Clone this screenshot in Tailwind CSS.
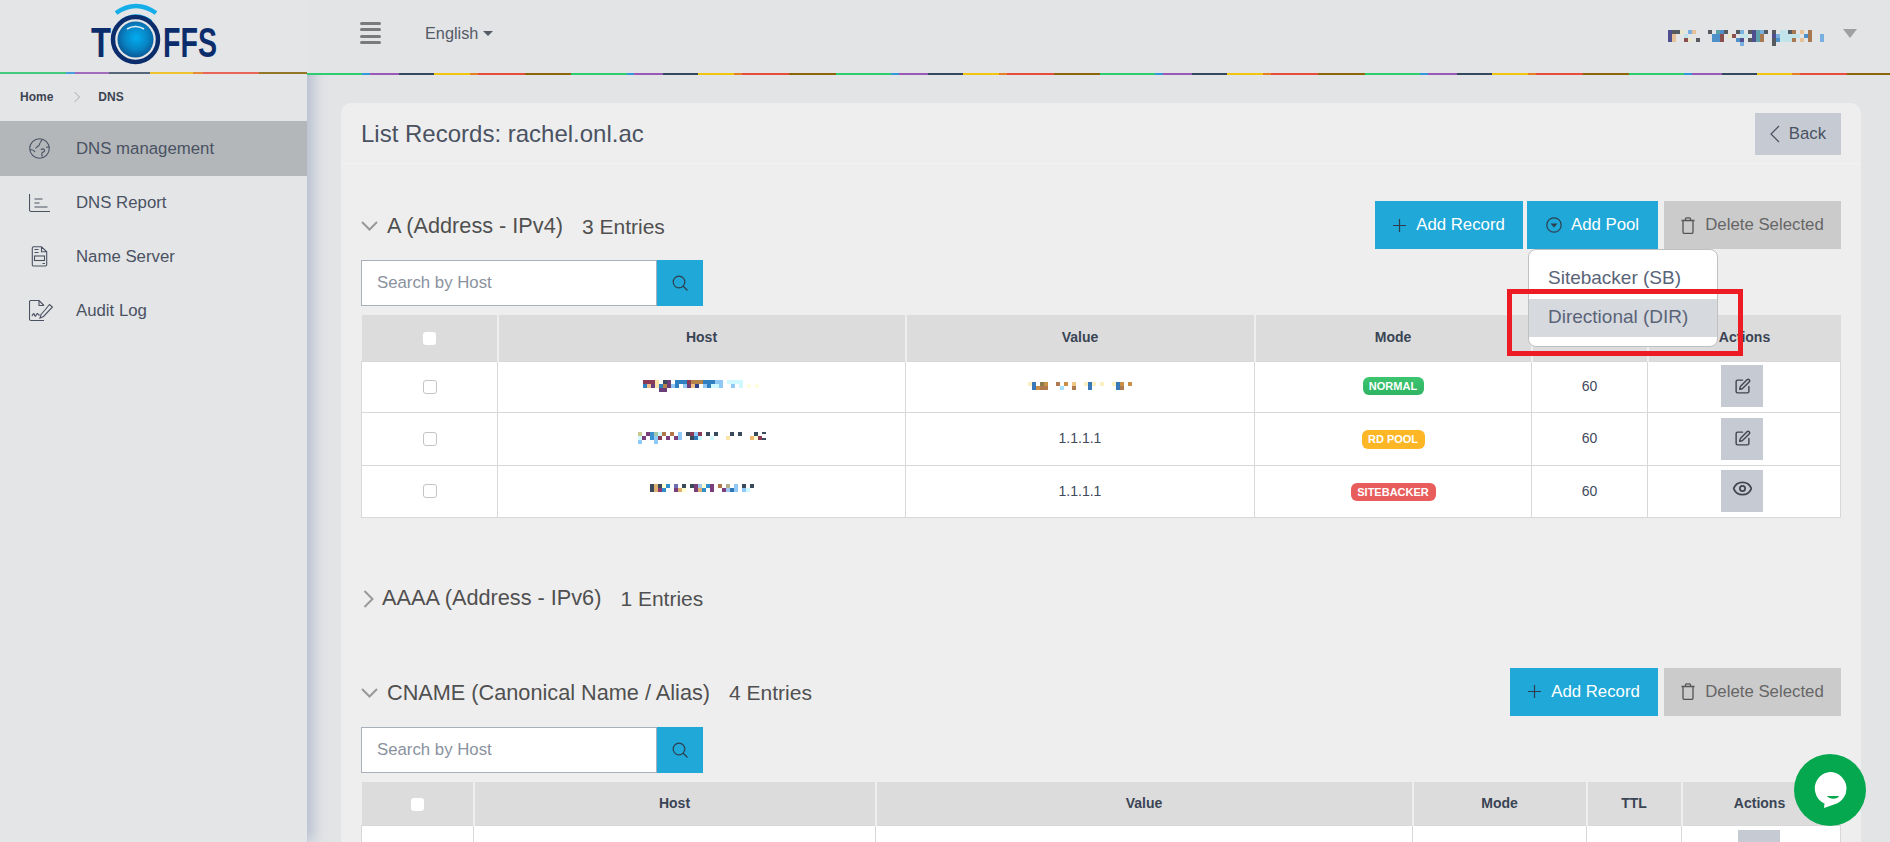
<!DOCTYPE html>
<html lang="en">
<head>
<meta charset="utf-8">
<title>List Records</title>
<script src="https://cdn.jsdelivr.net/npm/@tailwindcss/browser@4"></script>
</head>
<body class="font-['Liberation_Sans',Arial,sans-serif]">
<div class="relative flex h-[842px] w-[1890px] overflow-hidden bg-[#e3e4e6] text-[#4a5262]">

  <!-- left column -->
  <aside class="relative z-10 flex w-[307px] shrink-0 flex-col bg-[#e4e5e7] shadow-[6px_0_14px_#b4bdcf]">
    <div class="h-[72px]">
      <svg width="307" height="72" viewBox="0 0 307 72">
        <defs><radialGradient id="lens" cx="0.52" cy="0.45" r="0.6"><stop offset="0" stop-color="#02adf0"/><stop offset="0.55" stop-color="#0784c4"/><stop offset="1" stop-color="#0b4f8e"/></radialGradient></defs>
        <path d="M116 13Q136 -1 156 13" fill="none" stroke="#15aee8" stroke-width="4.5"/>
        <path d="M121 22Q136 11 151 22" fill="none" stroke="#15aee8" stroke-width="4.5"/>
        <text x="91" y="57" font-size="43" font-weight="700" fill="#0c2d6b" font-family="Liberation Sans" textLength="20" lengthAdjust="spacingAndGlyphs">T</text>
        <text x="163" y="57" font-size="43" font-weight="700" fill="#0c2d6b" font-family="Liberation Sans" textLength="54" lengthAdjust="spacingAndGlyphs">FFS</text>
        <circle cx="135.5" cy="39.5" r="22.5" fill="#e4e5e7" stroke="#0c2d6b" stroke-width="4.5"/>
        <circle cx="135.5" cy="39.5" r="18" fill="url(#lens)"/>
        <path d="M127 29Q135.500 24 144 29" fill="none" stroke="#dfeef6" stroke-width="1.500"/>
      </svg>
    </div>
    <div class="h-[2px] bg-[linear-gradient(90deg,#45c97f_0,#45c97f_66px,#4a9fdc_66px,#4a9fdc_75px,#a06cbb_75px,#a06cbb_109px,#56677a_109px,#56677a_150px,#efc22f_150px,#efc22f_193px,#e68a3c_193px,#e68a3c_203px,#e8655a_203px,#e8655a_259px,#957626_259px,#957626_307px)]"></div>
    <nav class="flex h-[47px] items-center pb-[2px] pl-[20px] text-[12px] font-bold text-[#3c4452]">
      <span>Home</span>
      <svg class="ml-[20px]" width="8" height="12" viewBox="0 0 8 12" fill="none" stroke="#aaa" stroke-width="1"><path d="M1.500 1 L6.500 6 L1.500 11"/></svg>
      <span class="ml-[17px]">DNS</span>
    </nav>
    <a class="flex h-[55px] items-center bg-[#b3b7ba] pl-[29px] text-[16.8px]">
      <svg class="w-[21px]" width="21" height="21" viewBox="0 0 21 21" fill="none" stroke="#4a5262" stroke-width="1.100"><circle cx="10.500" cy="10.500" r="9.800"/><path d="M1 12c3-1 4 1 5 2M13 1.500c-.5 2-2.500 3-2.500 5s-3 2-4 4M12 12c1-2 3-1 3.500 0s-1 2-2 2.500-1 3 0 4M17 9c1 0 2 0 3 .5M8 8l1 1"/></svg>
      <span class="ml-[26px]">DNS management</span>
    </a>
    <a class="flex h-[54px] items-center pl-[29px] text-[16.8px]">
      <svg class="w-[21px]" width="21" height="20" viewBox="0 0 21 20" fill="none" stroke="#4a5262" stroke-width="1.100"><path d="M.5 1v16a1.500 1.500 0 0 0 1.500 1.500h19M5.500 6h8M5.500 10h5M5.500 14h13"/></svg>
      <span class="ml-[26px]">DNS Report</span>
    </a>
    <a class="flex h-[54px] items-center pb-[1px] pl-[29px] text-[16.8px]">
      <svg class="w-[21px]" width="21" height="21" viewBox="0 0 16 21" fill="none" stroke="#4a5262" stroke-width="1.100"><path d="M2 .8h8l5.200 5v13a1.200 1.200 0 0 1-1.200 1.200H2a1.200 1.200 0 0 1-1.200-1.200V2A1.200 1.200 0 0 1 2 .8zM10 .8v5h5.200M3 3.500h4M3 6.500h4M11 17.500h2.500"/><rect x="3" y="10" width="10" height="4.500"/></svg>
      <span class="ml-[26px]">Name Server</span>
    </a>
    <a class="flex h-[54px] items-center pb-[1px] pl-[29px] text-[16.8px]">
      <svg class="w-[24px]" width="24" height="22" viewBox="0 0 24 22" fill="none" stroke="#4a5262" stroke-width="1.100"><path d="M15 20.500H2A1.500 1.500 0 0 1 .5 19V2A1.500 1.500 0 0 1 2 .5h8l5 5M10 .5v5h5M16 10l4.500-5.500 3 2.500-9 9.500-3.500 1.500 1-3.500zM3 16c1.500-3 2-3 2.500-1s1 1.500 2-.5 1.500 0 3 1"/></svg>
      <span class="ml-[23px]">Audit Log</span>
    </a>
  </aside>

  <!-- right column -->
  <div class="flex min-w-0 flex-1 flex-col">
    <header class="relative z-20 flex h-[73px] shrink-0 items-center bg-[#e3e4e6] pb-[7px]">
      <div class="ml-[53px] flex h-[22px] w-[21px] flex-col justify-between">
        <i class="block h-[3px] rounded-sm bg-[#7a7a7a]"></i><i class="block h-[3px] rounded-sm bg-[#7a7a7a]"></i><i class="block h-[3px] rounded-sm bg-[#7a7a7a]"></i><i class="block h-[3px] rounded-sm bg-[#7a7a7a]"></i>
      </div>
      <span class="ml-[44px] text-[16.3px] text-[#555b66]">English</span>
      <svg class="ml-[5px]" width="10" height="5" viewBox="0 0 10 5"><path d="M0 0h10L5 5z" fill="#555b66"/></svg>
      <svg class="ml-[1175px] mt-[10px]" width="156" height="16" viewBox="0 0 156 16" shape-rendering="crispEdges">
        <g fill="#555a60"><path d="M4 0h8v4H4zM40 0h4v4h-4zM56 0h4v4h-4zM68 0h4v4h-4zM80 0h4v4h-4zM96 0h4v4h-4zM104 0h4v4h-4zM120 0h8v4h-8zM144 0h-8v4h8zM28 8h4v4h-4zM80 8h4v4h-4zM68 8h4v4h-4zM104 8h4v4h-4zM104 12h4v4h-4zM132 0h12v4h-12z"/></g>
        <g fill="#4f4f8f"><path d="M0 0h4v12H0zM84 0h4v4h-4zM84 4h4v8h-4zM104 4h4v4h-4zM72 8h4v4h-4zM72 4v0"/></g>
        <g fill="#e8c098"><path d="M4 4h4v8H4zM24 0h4v4h-4zM132 8h4v4h-4zM132 0h4v4h-4z"/></g>
        <g fill="#e8e8c8"><path d="M12 0h4v4h-4zM20 8h4v4h-4zM60 4h4v4h-4z"/></g>
        <g fill="#5090c8"><path d="M44 4h8v8h-8zM52 0h4v4h-4zM68 8h4v4h-4zM108 8h4v4h-4zM140 4h-4v4h4z"/></g>
        <g fill="#7ab0e0"><path d="M20 0h4v4h-4zM72 0h4v4h-4zM92 0h4v4h-4zM108 4h8v4h-8zM152 4h4v8h-4zM72 12h4v4h-4z"/></g>
        <g fill="#c0e4ea"><path d="M16 4h4v4h-4zM72 4h8v4h-8zM112 0h8v12h-8zM120 4h12v4h-12zM116 8h12v4h-12z"/></g>
        <g fill="#8a5050"><path d="M16 8h4v4h-4zM52 4h4v8h-4zM64 4h4v4h-4z"/></g>
        <g fill="#a87850"><path d="M92 4h4v8h-4zM124 0h4v4h-4zM124 8h4v4h-4zM140 0h4v12h-4z"/></g>
        <g fill="#60a0a8"><path d="M48 0h4v4h-4zM88 0h4v12h-4z"/></g>
      </svg>
      <svg class="ml-[19px]" width="14" height="9" viewBox="0 0 14 9"><path d="M0 0h14L7 9z" fill="#a0a0a0"/></svg>
    </header>
    <div class="relative z-20 h-[2px] shrink-0 bg-[repeating-linear-gradient(90deg,#2ecc71_0,#2ecc71_55px,#3498db_55px,#3498db_63px,#9b59b6_63px,#9b59b6_92px,#34495e_92px,#34495e_127px,#f1c40f_127px,#f1c40f_163px,#e67e22_163px,#e67e22_171px,#e74c3c_171px,#e74c3c_218px,#8b6508_218px,#8b6508_264.5px)]"></div>

    <main class="ml-[34px] mr-[29px] mt-[28px] shrink-0 rounded-t-[10px] bg-[#eeeeee]">
      <div class="flex h-[61px] items-start justify-between border-b border-[#f2f2f2] px-[20px] pt-[10px]">
        <h1 class="mt-[6px] text-[24px] leading-[30px] text-[#4a5262]">List Records: rachel.onl.ac</h1>
        <button class="flex h-[42px] w-[86px] items-center justify-center gap-[9px] bg-[#c6cbd3] text-[16.8px] text-[#4a5262]">
          <svg width="10" height="18" viewBox="0 0 10 18" fill="none" stroke="#4a5262" stroke-width="1.200"><path d="M9 1 L1 9 L9 17"/></svg>Back
        </button>
      </div>

      <section class="mt-[37px] px-[20px]">
        <div class="flex h-[48px] items-center">
          <svg class="mt-[2px]" width="17" height="10" viewBox="0 0 17 10" fill="none" stroke="#999" stroke-width="2"><path d="M1 1 L8.500 8.500 L16 1"/></svg>
          <h2 class="ml-[9px] pt-[3px] text-[21.7px] text-[#505050]">A (Address - IPv4)</h2>
          <span class="ml-[19px] pt-[3px] text-[21px] text-[#505050]">3 Entries</span>
          <div class="ml-auto flex">
            <button class="flex h-[48px] w-[148px] items-center justify-center gap-[10px] bg-[#1fa8d8] text-[16.8px] text-white">
              <svg width="13" height="13" viewBox="0 0 13 13" fill="none" stroke="#2f3e4e" stroke-width="1.200"><path d="M6.500 0v13M0 6.500h13"/></svg>Add Record
            </button>
            <div class="relative ml-[4px]">
              <button class="flex h-[48px] w-[131px] items-center justify-center gap-[9px] bg-[#1fa8d8] text-[16.8px] text-white">
                <svg width="16" height="16" viewBox="0 0 16 16"><circle cx="8" cy="8" r="7.200" fill="none" stroke="#2f3e4e" stroke-width="1.200"/><path d="M4.500 6.500h7L8 10.500z" fill="#2f3e4e"/></svg>Add Pool
              </button>
              <div class="absolute left-[1px] top-[48px] z-30 h-[98px] w-[190px] overflow-hidden rounded-lg border border-[#c0c0c0] bg-white py-[10px] text-[19px] text-[#5a6478]">
                <div class="flex h-[39px] items-center pb-[2px] pl-[19px]">Sitebacker (SB)</div>
                <div class="flex h-[38px] items-center pb-[2px] pl-[19px] bg-[#d6d9de]">Directional (DIR)</div>
              </div>
              <div class="absolute left-[-20px] top-[88px] z-40 h-[67px] w-[236px] border-[5px] border-[#ed1c24]"></div>
            </div>
            <button class="ml-[6px] flex h-[48px] w-[177px] items-center justify-center gap-[10px] bg-[#cbcbcb] text-[16.8px] text-[#666]">
              <svg width="14" height="17" viewBox="0 0 14 17" fill="none" stroke="#555" stroke-width="1.300"><path d="M.5 3.500h13M2 3.500v11.500a1.500 1.500 0 0 0 1.500 1.500h7a1.500 1.500 0 0 0 1.500-1.500V3.500M4.500 3.500V1.800A1 1 0 0 1 5.500.800h3a1 1 0 0 1 1 1v1.700"/></svg>Delete Selected
            </button>
          </div>
        </div>
        <div class="mt-[11px] flex h-[46px] w-[342px]">
          <input class="h-full w-[296px] border border-[#a9b0bc] bg-white pl-[15px] text-[16.8px] placeholder:text-[#8a929e]" placeholder="Search by Host">
          <button class="flex h-full w-[46px] items-center justify-center bg-[#1fa8d8]">
            <svg width="16" height="16" viewBox="0 0 16 16" fill="none" stroke="#2f3e4e" stroke-width="1.200"><circle cx="7" cy="7" r="5.800"/><path d="M11 11l4.500 4.500"/></svg>
          </button>
        </div>
        <table class="mt-[9px] w-[1479px] table-fixed border-collapse text-center text-[14px] text-[#3f4a5c]">
          <colgroup><col class="w-[136px]"><col class="w-[408px]"><col class="w-[349px]"><col class="w-[277px]"><col class="w-[116px]"><col class="w-[193px]"></colgroup>
          <thead class="bg-[#dcdcdc] font-bold text-[#3a4454]">
            <tr class="h-[46px]">
              <th class="border-r-2 border-[#eeeeee] pt-[2px]"><input type="checkbox" class="block h-[13px] w-[13px] mx-auto appearance-none rounded-[3px] bg-white"></th>
              <th class="border-r-2 border-[#eeeeee]">Host</th>
              <th class="border-r-2 border-[#eeeeee]">Value</th>
              <th class="border-r-2 border-[#eeeeee]">Mode</th>
              <th class="border-r-2 border-[#eeeeee]">TTL</th>
              <th>Actions</th>
            </tr>
          </thead>
          <tbody class="bg-white">
            <tr class="h-[51px]">
              <td class="border border-[#d8d8d8]"><input type="checkbox" class="mx-auto block h-[14px] w-[14px] appearance-none rounded-[3px] border border-[#c4c4c4] bg-white"></td>
              <td class="border border-[#d8d8d8] pb-[2px]">
                <svg class="mx-auto" width="118" height="12" viewBox="0 0 118 12" shape-rendering="crispEdges">
                  <g fill="#8a3a55"><path d="M0 0h12v4H0zM44 0h4v4h-4z"/></g><g fill="#2f7fc1"><path d="M0 4h4v4H0zM16 4h4v4h-4zM32 0h8v4h-8zM32 4h4v4h-4zM40 0h4v4h-4zM60 0h12v4H60zM64 4h4v4h-4z"/></g>
                  <g fill="#f0c088"><path d="M4 4h4v4H4zM48 4h4v4h-4z"/></g><g fill="#6d3f7a"><path d="M8 4h4v4H8zM24 0h4v8h-4zM16 8h8v4h-8zM44 4h4v4h-4z"/></g>
                  <g fill="#fce3a8"><path d="M12 0h4v8h-4z"/></g><g fill="#3a4a5a"><path d="M20 0h4v4h-4z"/></g><g fill="#b5824a"><path d="M48 0h12v4H48zM20 4h4v4h-4z"/></g>
                  <g fill="#8fc8f4"><path d="M28 4h4v4h-4zM40 4h4v4h-4zM60 4h4v4h-4zM72 0h4v4h-4zM76 0h4v8h-4zM72 4h4v4h-4zM88 4h4v4h-4z"/></g>
                  <g fill="#d0f8ff"><path d="M84 0h12v4H84zM96 0h4v8h-4zM68 4h8v4h-8z"/></g><g fill="#2f3f8a"><path d="M52 4h4v4h-4z"/></g><g fill="#fdfde0"><path d="M104 4h4v4h-4zM112 4h4v4h-4z"/></g>
                </svg>
              </td>
              <td class="border border-[#d8d8d8] pb-[2px]">
                <svg class="mx-auto" width="104" height="8" viewBox="0 0 104 8" shape-rendering="crispEdges">
                  <g fill="#fdf0c0"><path d="M0 0h4v4H0zM44 0h4v4h-4zM56 0h4v4h-4zM64 0h4v4h-4zM72 0h4v4h-4zM84 0h4v4h-4z"/></g><g fill="#3a78b8"><path d="M4 0h4v8H4zM60 0h4v8h-4zM88 0h4v8h-4z"/></g>
                  <g fill="#8a7a50"><path d="M12 0h4v4h-4z"/></g><g fill="#c89048"><path d="M16 0h4v4h-4zM8 4h4v4H8zM36 0h4v4h-4zM92 0h4v4h-4zM100 0h4v4h-4z"/></g>
                  <g fill="#b07a50"><path d="M28 0h4v4h-4zM12 4h8v4h-8zM44 4h4v4h-4zM92 4h4v4h-4z"/></g><g fill="#f0c888"><path d="M44 0h4v4h-4z"/></g><g fill="#a8e0ff"><path d="M32 4h4v4h-4z"/></g>
                </svg>
              </td>
              <td class="border border-[#d8d8d8] pb-[2px]"><span class="inline-block h-[18px] w-[61px] rounded-md bg-gradient-to-b from-[#3cc46f] to-[#2fb463] text-[11px] font-bold leading-[18px] text-white">NORMAL</span></td>
              <td class="border border-[#d8d8d8] pb-[1px]">60</td>
              <td class="border border-[#d8d8d8] pb-[1px] pr-[4px]"><span class="inline-flex h-[42px] w-[42px] items-center justify-center bg-[#c6cbd3] align-middle">
                <svg width="17" height="17" viewBox="0 0 24 24" fill="none" stroke="#3f4650" stroke-width="2" stroke-linecap="round" stroke-linejoin="round"><path d="M12 3H5a2 2 0 0 0-2 2v14a2 2 0 0 0 2 2h14a2 2 0 0 0 2-2v-7"/><path d="M18.375 2.625a1 1 0 0 1 3 3l-9.013 9.014a2 2 0 0 1-.853.505l-2.873.84a.5.500 0 0 1-.62-.62l.84-2.873a2 2 0 0 1 .506-.852z"/></svg>
              </span></td>
            </tr>
            <tr class="h-[53px]">
              <td class="border border-[#d8d8d8]"><input type="checkbox" class="mx-auto block h-[14px] w-[14px] appearance-none rounded-[3px] border border-[#c4c4c4] bg-white"></td>
              <td class="border border-[#d8d8d8] pb-[1px]">
                <svg class="mx-auto" width="128" height="12" viewBox="0 0 128 12" shape-rendering="crispEdges">
                  <g fill="#c8c890"><path d="M0 0h4v4H0z"/></g><g fill="#7a3f7a"><path d="M8 0h4v4H8zM4 4h4v4H4zM28 4h4v4h-4zM36 4h4v4h-4zM44 0h0zM120 0h0z"/></g>
                  <g fill="#3a90d0"><path d="M12 0h4v8h-4z"/></g><g fill="#a0c8a8"><path d="M16 0h4v4h-4z"/></g><g fill="#d0f8ff"><path d="M0 4h4v4H0zM20 0h4v4h-4zM60 4h4v4h-4zM72 4h4v4h-4z"/></g>
                  <g fill="#b0784a"><path d="M24 0h4v4h-4zM32 0h4v4h-4z"/></g><g fill="#90c8f8"><path d="M40 0h4v8h-4zM16 4h4v4h-4zM0 8h4v4H0zM16 8h4v4h-4zM56 0h4v4h-4z"/></g>
                  <g fill="#8a3a55"><path d="M20 4h4v4h-4zM52 0h4v4h-4zM60 0h4v4h-4zM120 4h4v4h-4z"/></g><g fill="#3a4a5a"><path d="M48 0h4v4h-4zM52 4h4v4h-4zM68 0h4v4h-4zM76 0h4v4h-4zM92 0h4v4h-4zM100 0h4v4h-4zM116 0h4v4h-4zM124 0h4v2h-4zM124 6h4v2h-4z"/></g>
                  <g fill="#2f78b8"><path d="M56 4h4v4h-4z"/></g><g fill="#fce3a8"><path d="M88 4h4v4h-4z"/></g><g fill="#f0b870"><path d="M112 4h4v4h-4z"/></g><g fill="#ffffd0"><path d="M116 4h4v4h-4z"/></g>
                </svg>
              </td>
              <td class="border border-[#d8d8d8] pb-[1px]">1.1.1.1</td>
              <td class="border border-[#d8d8d8] pb-[1px]"><span class="inline-block h-[19px] w-[63px] rounded-md bg-[#fdb726] text-[11px] font-bold leading-[19px] text-white">RD POOL</span></td>
              <td class="border border-[#d8d8d8] pb-[1px]">60</td>
              <td class="border border-[#d8d8d8] pr-[4px]"><span class="inline-flex h-[42px] w-[42px] items-center justify-center bg-[#c6cbd3] align-middle">
                <svg width="17" height="17" viewBox="0 0 24 24" fill="none" stroke="#3f4650" stroke-width="2" stroke-linecap="round" stroke-linejoin="round"><path d="M12 3H5a2 2 0 0 0-2 2v14a2 2 0 0 0 2 2h14a2 2 0 0 0 2-2v-7"/><path d="M18.375 2.625a1 1 0 0 1 3 3l-9.013 9.014a2 2 0 0 1-.853.505l-2.873.84a.5.500 0 0 1-.62-.62l.84-2.873a2 2 0 0 1 .506-.852z"/></svg>
              </span></td>
            </tr>
            <tr class="h-[52px]">
              <td class="border border-[#d8d8d8]"><input type="checkbox" class="mx-auto block h-[14px] w-[14px] appearance-none rounded-[3px] border border-[#c4c4c4] bg-white"></td>
              <td class="border border-[#d8d8d8] pb-[6px]">
                <svg class="mx-auto" width="104" height="8" viewBox="0 0 104 8" shape-rendering="crispEdges">
                  <g fill="#3a4a5a"><path d="M0 0h4v8H0zM8 0h4v4H8zM32 0h4v4h-4zM40 0h4v4h-4zM92 0h4v4h-4zM100 0h4v4h-4z"/></g><g fill="#e0b070"><path d="M4 0h4v8H4zM28 4h4v4h-4zM48 4h4v4h-4z"/></g>
                  <g fill="#ffffd0"><path d="M12 0h4v4h-4zM52 0h4v4h-4zM32 4h4v4h-4z"/></g><g fill="#2f90d0"><path d="M16 0h4v4h-4zM12 4h4v4h-4zM56 0h4v4h-4zM52 4h4v4h-4z"/></g><g fill="#6a70b0"><path d="M24 0h4v4h-4z"/></g>
                  <g fill="#7a3f7a"><path d="M44 0h4v4h-4zM24 4h4v4h-4zM44 4h4v4h-4zM60 0h4v8h-4zM72 4h4v4h-4z"/></g><g fill="#8a3a70"><path d="M8 4h4v4H8z"/></g><g fill="#a0c8f0"><path d="M48 0h4v4h-4zM76 4h4v4h-4z"/></g>
                  <g fill="#b0784a"><path d="M68 0h4v4h-4z"/></g><g fill="#b0b090"><path d="M76 0h4v4h-4z"/></g><g fill="#90c8f8"><path d="M84 0h4v8h-4zM92 4h4v4h-4z"/></g><g fill="#2f78b8"><path d="M80 4h4v4h-4z"/></g><g fill="#d0f8ff"><path d="M96 4h4v4h-4z"/></g>
                </svg>
              </td>
              <td class="border border-[#d8d8d8]">1.1.1.1</td>
              <td class="border border-[#d8d8d8]"><span class="inline-block h-[18px] w-[85px] rounded-md bg-[#e85c5c] text-[11px] font-bold leading-[18px] text-white">SITEBACKER</span></td>
              <td class="border border-[#d8d8d8]">60</td>
              <td class="border border-[#d8d8d8] pb-[1px] pr-[4px]"><span class="inline-flex h-[42px] w-[42px] items-start justify-center bg-[#c6cbd3] pt-[8px] align-middle">
                <svg width="21" height="21" viewBox="0 0 24 24" fill="none" stroke="#3f4650" stroke-width="2" stroke-linecap="round" stroke-linejoin="round"><path d="M2.062 12.348a1 1 0 0 1 0-.696 10.750 10.750 0 0 1 19.876 0 1 1 0 0 1 0 .696 10.750 10.750 0 0 1-19.876 0"/><circle cx="12" cy="12" r="3"/></svg>
              </span></td>
            </tr>
          </tbody>
        </table>
      </section>

      <section class="mt-[57px] px-[20px]">
        <div class="flex h-[48px] items-center">
          <svg class="ml-[2px]" width="11" height="18" viewBox="0 0 11 18" fill="none" stroke="#999" stroke-width="2"><path d="M1.500 1 L9.500 9 L1.500 17"/></svg>
          <h2 class="ml-[8px] text-[21.7px] text-[#505050]">AAAA (Address - IPv6)</h2>
          <span class="ml-[19px] text-[21px] text-[#505050]">1 Entries</span>
        </div>
      </section>

      <section class="mt-[45px] px-[20px]">
        <div class="flex h-[48px] items-center">
          <svg class="mt-[3px]" width="17" height="10" viewBox="0 0 17 10" fill="none" stroke="#999" stroke-width="2"><path d="M1 1 L8.500 8.500 L16 1"/></svg>
          <h2 class="ml-[9px] pt-[3px] text-[21.7px] text-[#505050]">CNAME (Canonical Name / Alias)</h2>
          <span class="ml-[19px] pt-[3px] text-[21px] text-[#505050]">4 Entries</span>
          <div class="ml-auto flex">
            <button class="flex h-[48px] w-[148px] items-center justify-center gap-[10px] bg-[#1fa8d8] text-[16.8px] text-white">
              <svg width="13" height="13" viewBox="0 0 13 13" fill="none" stroke="#2f3e4e" stroke-width="1.200"><path d="M6.500 0v13M0 6.500h13"/></svg>Add Record
            </button>
            <button class="ml-[6px] flex h-[48px] w-[177px] items-center justify-center gap-[10px] bg-[#cbcbcb] text-[16.8px] text-[#666]">
              <svg width="14" height="17" viewBox="0 0 14 17" fill="none" stroke="#555" stroke-width="1.300"><path d="M.5 3.500h13M2 3.500v11.500a1.500 1.500 0 0 0 1.500 1.500h7a1.500 1.500 0 0 0 1.500-1.500V3.500M4.500 3.500V1.800A1 1 0 0 1 5.500.800h3a1 1 0 0 1 1 1v1.700"/></svg>Delete Selected
            </button>
          </div>
        </div>
        <div class="mt-[11px] flex h-[46px] w-[342px]">
          <input class="h-full w-[296px] border border-[#a9b0bc] bg-white pl-[15px] text-[16.8px] placeholder:text-[#8a929e]" placeholder="Search by Host">
          <button class="flex h-full w-[46px] items-center justify-center bg-[#1fa8d8]">
            <svg width="16" height="16" viewBox="0 0 16 16" fill="none" stroke="#2f3e4e" stroke-width="1.200"><circle cx="7" cy="7" r="5.800"/><path d="M11 11l4.500 4.500"/></svg>
          </button>
        </div>
        <table class="mt-[9px] w-[1479px] table-fixed border-collapse text-center text-[14px] text-[#3f4a5c]">
          <colgroup><col class="w-[112px]"><col class="w-[402px]"><col class="w-[537px]"><col class="w-[174px]"><col class="w-[95px]"><col class="w-[159px]"></colgroup>
          <thead class="bg-[#dcdcdc] font-bold text-[#3a4454]">
            <tr class="h-[44px]">
              <th class="border-r-2 border-[#eeeeee] pt-[2px]"><input type="checkbox" class="mx-auto block h-[13px] w-[13px] appearance-none rounded-[3px] bg-white"></th>
              <th class="border-r-2 border-[#eeeeee]">Host</th>
              <th class="border-r-2 border-[#eeeeee]">Value</th>
              <th class="border-r-2 border-[#eeeeee]">Mode</th>
              <th class="border-r-2 border-[#eeeeee]">TTL</th>
              <th class="pr-[4px]">Actions</th>
            </tr>
          </thead>
          <tbody class="bg-white">
            <tr class="h-[51px]">
              <td class="border border-[#d8d8d8]"></td>
              <td class="border border-[#d8d8d8]"></td>
              <td class="border border-[#d8d8d8]"></td>
              <td class="border border-[#d8d8d8]"></td>
              <td class="border border-[#d8d8d8]"></td>
              <td class="border border-[#d8d8d8] pr-[4px]"><span class="inline-block h-[42px] w-[42px] bg-[#c6cbd3] align-middle"></span></td>
            </tr>
          </tbody>
        </table>
      </section>
    </main>
  </div>

  <!-- chat launcher -->
  <div class="absolute left-[1794px] top-[754px] z-50 flex h-[72px] w-[72px] items-center justify-center rounded-full bg-[#05a84f]">
    <svg width="36" height="38" viewBox="0 0 36 38"><path d="M18 1a16.500 16.500 0 0 1 4 32.500L12 37l.5-4.500A16.500 16.500 0 0 1 18 1z" fill="#fff"/><path d="M15 25h12c-1.500 3.500-9.500 3.500-12 0z" fill="#05a84f"/></svg>
  </div>
</div>
</body>
</html>
